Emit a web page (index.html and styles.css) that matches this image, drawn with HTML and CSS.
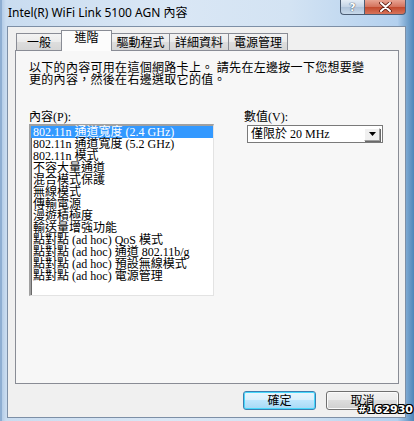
FILE: index.html
```html
<!DOCTYPE html>
<html lang="zh-Hant">
<head>
    <meta charset="UTF-8">
    <meta name="viewport" content="width=device-width, initial-scale=1.0">
    <title>Intel(R) WiFi Link 5100 AGN 內容</title>
    <link rel="stylesheet" href="styles.css">
</head>
<body>

    <div class="window">
        <div class="titlebar">
            <span class="title">Intel(R) WiFi Link 5100 AGN 內容</span>
            <div class="caption-buttons">
                <span class="cap-btn help">?</span>
                <span class="cap-btn close">
                    <svg width="13" height="10" viewBox="0 0 13 10">
                        <path d="M2 1 L11 9 M11 1 L2 9" stroke="#5a1a10" stroke-width="3.6" stroke-linecap="round"/>
                        <path d="M2 1 L11 9 M11 1 L2 9" stroke="#ffffff" stroke-width="2" stroke-linecap="round"/>
                    </svg>
                </span>
            </div>
        </div>

        <div class="client">
            <div class="tabs">
                <span class="tab tab-general">一般</span>
                <span class="tab active">進階</span>
                <span class="tab">驅動程式</span>
                <span class="tab">詳細資料</span>
                <span class="tab">電源管理</span>
            </div>

            <div class="panel">
                <p class="intro">以下的內容可用在這個網路卡上。 請先在左邊按一下您想要變<br>更的內容，然後在右邊選取它的值。</p>

                <div class="fields">
                    <div class="field-left">
                        <div class="label">內容(P):</div>
                        <ul class="listbox">
                            <li class="selected">802.11n 通道寬度 (2.4 GHz)</li>
                            <li>802.11n 通道寬度 (5.2 GHz)</li>
                            <li>802.11n 模式</li>
                            <li>不容大量通道</li>
                            <li>混合模式保護</li>
                            <li>無線模式</li>
                            <li>傳輸電源</li>
                            <li>漫遊積極度</li>
                            <li>輸送量增強功能</li>
                            <li>點對點 (ad hoc) QoS 模式</li>
                            <li>點對點 (ad hoc) 通道 802.11b/g</li>
                            <li>點對點 (ad hoc) 預設無線模式</li>
                            <li>點對點 (ad hoc) 電源管理</li>
                        </ul>
                    </div>
                    <div class="field-right">
                        <div class="label">數值(V):</div>
                        <div class="combo">
                            <span class="combo-value">僅限於 20 MHz</span>
                            <span class="combo-drop">
                                <svg width="7" height="4" viewBox="0 0 7 4"><path d="M0 0 H7 L3.5 4 Z" fill="#000"/></svg>
                            </span>
                        </div>
                    </div>
                </div>
            </div>

            <div class="actions">
                <button class="btn default">確定</button>
                <button class="btn">取消</button>
            </div>
        </div>

        <span class="watermark">#162930</span>
    </div>

</body>
</html>
```

FILE: styles.css
```css
* {
    box-sizing: border-box;
}
body {
    margin: 0;
    width: 414px;
    height: 421px;
    overflow: hidden;
    font-family: "Liberation Serif", "Noto Sans CJK TC", serif;
    font-size: 12px;
    color: #000;
}
.window {
    position: relative;
    width: 414px;
    height: 421px;
    display: flex;
    flex-direction: column;
    padding: 0 8px 3px 7px;
    background: linear-gradient(to right, #a9c4e2 0px, #c9dcf0 6px, #dae7f5 40%, #d3e3f3 70%, #b3d0ee 96%, #4e86b9 100%);
    box-shadow: inset 3px 0 0 -1px #8eaed2;
}
.titlebar {
    height: 26px;
    display: flex;
    justify-content: space-between;
    align-items: flex-start;
    padding-left: 1px;
}
.title {
    margin-top: 5px;
    font-family: "Noto Sans", "Noto Sans CJK TC", sans-serif;
    font-size: 12px;
    line-height: 15px;
    color: #000;
}
.caption-buttons {
    display: flex;
    margin-right: 0;
}
.cap-btn {
    height: 15px;
    display: flex;
    align-items: center;
    justify-content: center;
    border: 1px solid #4c5d74;
    border-top: none;
}
.help {
    width: 24px;
    border-radius: 0 0 0 4px;
    border-right: none;
    background: linear-gradient(#e4ecf5, #c3d3e5 50%, #afc3da 51%, #c8d9ea);
    color: #fff;
    font-family: "DejaVu Sans", sans-serif;
    font-weight: bold;
    font-size: 11px;
    text-shadow: 0 0 1px #33475f, 0 0 1px #33475f;
}
.close {
    width: 42px;
    border-radius: 0 0 4px 0;
    background: linear-gradient(#e8a493, #d3715b 50%, #c2492d 51%, #d7735a);
}
.client {
    flex: 1;
    display: flex;
    flex-direction: column;
    background: #f0f0f0;
    border: 1px solid #7d8fa6;
    padding: 4px 6px 0 7px;
}
.tabs {
    display: flex;
    align-items: flex-end;
    height: 20px;
    margin-bottom: -1px;
    padding-left: 1px;
}
.tab {
    height: 18px;
    padding-top: 2px;
    text-align: center;
    line-height: 14px;
    border: 1px solid #898c95;
    border-bottom: none;
    border-left: none;
    background: linear-gradient(#f3f3f3, #ebebeb 45%, #dddddd 50%, #d5d5d5);
}
.tab-general {
    width: 46px;
    border-left: 1px solid #898c95;
}
.tab:nth-child(3) {
    width: 58px;
}
.tab:nth-child(4),
.tab:nth-child(5) {
    width: 59px;
}
.tab.active {
    position: relative;
    z-index: 1;
    width: 51px;
    height: 21px;
    padding-top: 1px;
    line-height: 13px;
    margin-left: -1px;
    border-left: 1px solid #898c95;
    background: #fcfcfc;
}
.panel {
    width: 384px;
    height: 334px;
    border: 1px solid #898c95;
    background: #f7f7f7;
    padding: 11px 0 0 13px;
}
.intro {
    margin: 0;
    line-height: 12px;
    letter-spacing: 0.3px;
}
.fields {
    display: flex;
    margin-top: 25px;
}
.label {
    line-height: 12px;
    height: 13px;
}
.field-left {
    width: 185px;
}
.field-right {
    margin-left: 30px;
}
.listbox {
    list-style: none;
    margin: 0;
    width: 185px;
    height: 172px;
    padding: 0;
    background: #fff;
    border-top: 2px solid #a0a0a0;
    border-left: 2px solid #a0a0a0;
    border-right: 1px solid #e3e3e3;
    border-bottom: 1px solid #e3e3e3;
    box-shadow: inset 1px 1px 0 #696969;
}
.listbox li {
    height: 12px;
    line-height: 12px;
    padding-left: 2px;
    white-space: nowrap;
}
.listbox li.selected {
    background: #3399ff;
    color: #fff;
}
.combo {
    margin-left: 3px;
    margin-top: 1px;
    width: 136px;
    height: 18px;
    display: flex;
    align-items: center;
    justify-content: space-between;
    background: #fff;
    border: 1px solid #7a7a7a;
    padding: 0 2px 0 3px;
}
.combo-value {
    line-height: 12px;
}
.combo-drop {
    width: 16px;
    height: 13px;
    display: flex;
    align-items: center;
    justify-content: center;
    border: 1px solid #a0a0a0;
    border-top-color: #fff;
    border-left-color: #fff;
    background: #f0f0f0;
    box-shadow: 1px 1px 0 #696969;
}
.actions {
    display: flex;
    justify-content: flex-end;
    gap: 10px;
    margin-top: 7px;
    padding-right: 0;
}
.btn {
    width: 73px;
    height: 19px;
    padding: 0;
    font-family: "Liberation Serif", "Noto Sans CJK TC", serif;
    font-size: 12px;
    line-height: 12px;
    color: #000;
    border: 1px solid #707070;
    border-radius: 3px;
    background: linear-gradient(#f2f2f2, #ebebeb 48%, #dddddd 50%, #cfcfcf);
    box-shadow: inset 0 0 0 1px #fbfbfb;
}
.btn.default {
    border-color: #3c7fb1;
    background: linear-gradient(#eaf6fd, #d9f0fc 48%, #bee6fd 50%, #a7d9f5);
    box-shadow: inset 0 0 0 1px #48d8fb;
}
.watermark {
    position: absolute;
    right: 1px;
    bottom: 5px;
    font-family: "DejaVu Sans", sans-serif;
    font-weight: bold;
    font-size: 11px;
    line-height: 12px;
    color: #fff;
    text-shadow: 1px 0 0 #000, -1px 0 0 #000, 0 1px 0 #000, 0 -1px 0 #000, 1px 1px 0 #000, -1px -1px 0 #000, 1px -1px 0 #000, -1px 1px 0 #000;
}
```
